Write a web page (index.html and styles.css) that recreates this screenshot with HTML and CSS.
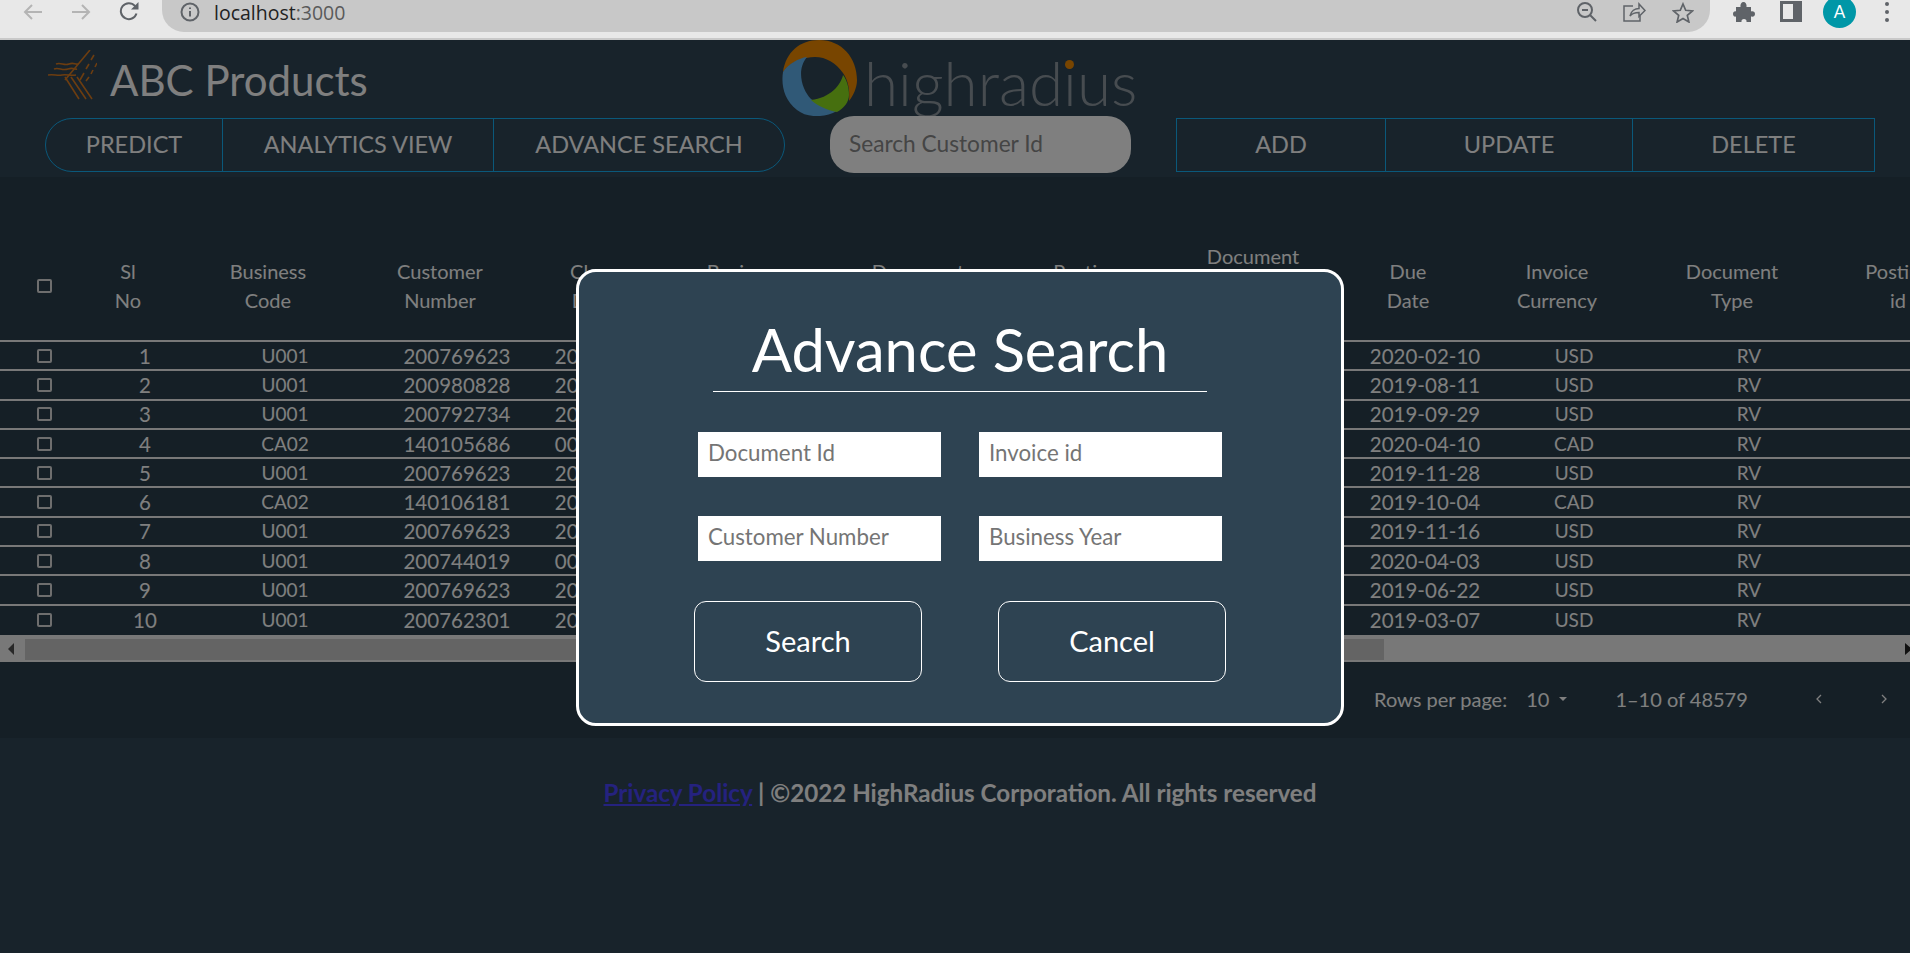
FILE: index.html

```html
<!DOCTYPE html>
<html lang="en">
<head>
    <meta charset="UTF-8">
    <meta name="viewport" content="width=device-width, initial-scale=1.0">
    <title>ABC Products</title>
    <link rel="stylesheet" href="styles.css">
</head>
<body>
    <!-- browser toolbar -->
    <div class="toolbar">
        <svg class="tb-icon tb-back" viewBox="0 0 20 18"><path d="M19 9H2M9 2 2 9l7 7"/></svg>
        <svg class="tb-icon tb-forward" viewBox="0 0 20 18"><path d="M1 9h17M11 2l7 7-7 7"/></svg>
        <svg class="tb-icon tb-reload" viewBox="0 0 21 20"><path d="M17.5 12.5a8 8 0 1 1-1.6-7.6L18 7"/><path class="solid" d="M19.500 1v7.500H12z"/></svg>
        <div class="url-pill">
            <svg class="tb-icon tb-info" viewBox="0 0 20 20"><circle cx="10" cy="10" r="8.500"/><path d="M10 9v5.500M10 5.500v1.500"/></svg>
            <span class="url"><b>localhost</b>:3000</span>
            <div class="pill-icons">
                <svg class="tb-icon tb-zoom" viewBox="0 0 20 20"><circle cx="8" cy="8" r="7"/><path d="M5 8h6M13 13l6 6"/></svg>
                <svg class="tb-icon tb-share" viewBox="0 0 23 20"><path d="M10 4H1v15h16v-5"/><path d="M7 14c1-5 5-7.500 9-7.500V2l6 6.500-6 6V10.500c-4 0-7 1-9 3.500z"/></svg>
                <svg class="tb-icon tb-star" viewBox="0 0 22 21"><path d="m11 2 2.700 6.300 6.800.6-5.200 4.500 1.600 6.600L11 16.500 5.100 20l1.600-6.600L1.500 8.900l6.800-.6z"/></svg>
            </div>
        </div>
        <svg class="tb-puzzle" viewBox="0 0 22 20"><path d="M3 5h4.500C7 2 8.500 0 10.500 0s3.500 2 3 5H18v4.500c2.500-.5 4 .5 4 2.500s-1.500 3-4 2.500V20h-4.500c.5-2-1-3-2.500-3s-3 1-2.500 3H3v-5.500C1.500 15 0 14 0 12s1.500-3 3-2.500z"/></svg>
        <div class="tb-panel"></div>
        <div class="avatar">A</div>
        <div class="tb-dots"><i></i><i></i><i></i></div>
    </div>

    <div class="app">
        <header class="brand-row">
            <svg class="abc-logo" viewBox="0 0 49 50">
                <path d="M8 14c5-2 8 2 13 0s6 1 9 0M6 19c5-2 8 2 14 0s6 1 9 0M0 25c6-1 9 1 14 0s8 1 14 0"/>
                <path d="M42 0 17 30M46 5l-3 5m-2 4-3 5m-2 4-4 7M49 13l-2 4m-2 3-2 4m-2 3-3 4"/>
                <path d="m17 27 14 22M23 27l15 22M29 27l15 22"/>
            </svg>
            <span class="abc-title">ABC Products</span>
            <div class="hr-logo">
                <svg class="hr-ring" viewBox="0 0 75 76">
                    <path class="ring-orange" d="M1 32C4 12 18 0 37 0c23 0 38 18 38 40 0 8-4 16-8 21 1-11-1-21-6-28-7-10-17-16-28-16C22 17 8 22 1 32z"/>
                    <path class="ring-blue" d="M25 17C17 18 6 24 1 32c-2 13 1 28 14 38 10 8 27 8 40 1-11-3-19-7-26-12C20 50 14 30 25 17z"/>
                    <path class="ring-green" d="M61 35c-2 10-13 23-32 25 7 6 16 10 26 12 7-4 12-10 12-17 0-7-2-15-6-20z"/>
                </svg>
                <span class="hr-name">highrad<span class="hr-i">i</span>us</span>
            </div>
        </header>

        <div class="nav-row">
            <div class="btn-group btn-group-left">
                <button class="nav-btn btn-predict">PREDICT</button>
                <button class="nav-btn btn-analytics">ANALYTICS VIEW</button>
                <button class="nav-btn btn-advance">ADVANCE SEARCH</button>
            </div>
            <input class="search-box" type="text" placeholder="Search Customer Id">
            <div class="btn-group btn-group-right">
                <button class="nav-btn btn-add">ADD</button>
                <button class="nav-btn btn-update">UPDATE</button>
                <button class="nav-btn btn-delete">DELETE</button>
            </div>
        </div>

        <section class="grid-panel">
            <div class="table-wrap">
                <table class="data-table">
                    <colgroup>
                        <col class="c-check"><col class="c-sl"><col class="c-code"><col class="c-cust">
                        <col class="c-clear"><col class="c-year"><col class="c-docid"><col class="c-post">
                        <col class="c-create"><col class="c-due"><col class="c-curr"><col class="c-type"><col class="c-pid">
                    </colgroup>
                    <thead>
                        <tr>
                            <th class="th-check"><input class="check" type="checkbox"></th>
                            <th>Sl<br>No</th>
                            <th>Business<br>Code</th>
                            <th>Customer<br>Number</th>
                            <th>Clear<br>Date</th>
                            <th>Business<br>Year</th>
                            <th>Document<br>Id</th>
                            <th>Posting<br>Date</th>
                            <th>Document<br>Create<br>Date</th>
                            <th>Due<br>Date</th>
                            <th>Invoice<br>Currency</th>
                            <th>Document<br>Type</th>
                            <th>Posting<br>id</th>
                        </tr>
                    </thead>
                    <tbody>
                        <tr><td><input class="check" type="checkbox"></td><td>1</td><td>U001</td><td>200769623</td><td>2020-02-11</td><td>2020</td><td>1930438491</td><td>2020-01-26</td><td>2020-01-25</td><td>2020-02-10</td><td>USD</td><td>RV</td><td></td></tr>
                        <tr><td><input class="check" type="checkbox"></td><td>2</td><td>U001</td><td>200980828</td><td>2019-08-08</td><td>2019</td><td>1929646410</td><td>2019-07-22</td><td>2019-07-22</td><td>2019-08-11</td><td>USD</td><td>RV</td><td></td></tr>
                        <tr><td><input class="check" type="checkbox"></td><td>3</td><td>U001</td><td>200792734</td><td>2019-12-30</td><td>2019</td><td>1929873765</td><td>2019-09-14</td><td>2019-09-14</td><td>2019-09-29</td><td>USD</td><td>RV</td><td></td></tr>
                        <tr><td><input class="check" type="checkbox"></td><td>4</td><td>CA02</td><td>140105686</td><td>0000-00-00</td><td>2020</td><td>2960623488</td><td>2020-03-30</td><td>2020-03-30</td><td>2020-04-10</td><td>CAD</td><td>RV</td><td></td></tr>
                        <tr><td><input class="check" type="checkbox"></td><td>5</td><td>U001</td><td>200769623</td><td>2019-11-25</td><td>2019</td><td>1930147974</td><td>2019-11-13</td><td>2019-11-13</td><td>2019-11-28</td><td>USD</td><td>RV</td><td></td></tr>
                        <tr><td><input class="check" type="checkbox"></td><td>6</td><td>CA02</td><td>140106181</td><td>2019-09-20</td><td>2019</td><td>2960581231</td><td>2019-09-20</td><td>2019-09-20</td><td>2019-10-04</td><td>CAD</td><td>RV</td><td></td></tr>
                        <tr><td><input class="check" type="checkbox"></td><td>7</td><td>U001</td><td>200769623</td><td>2019-11-12</td><td>2019</td><td>1930083275</td><td>2019-11-01</td><td>2019-11-01</td><td>2019-11-16</td><td>USD</td><td>RV</td><td></td></tr>
                        <tr><td><input class="check" type="checkbox"></td><td>8</td><td>U001</td><td>200744019</td><td>0000-00-00</td><td>2020</td><td>1930659387</td><td>2020-03-19</td><td>2020-03-19</td><td>2020-04-03</td><td>USD</td><td>RV</td><td></td></tr>
                        <tr><td><input class="check" type="checkbox"></td><td>9</td><td>U001</td><td>200769623</td><td>2019-06-11</td><td>2019</td><td>1929439637</td><td>2019-06-07</td><td>2019-06-07</td><td>2019-06-22</td><td>USD</td><td>RV</td><td></td></tr>
                        <tr><td><input class="check" type="checkbox"></td><td>10</td><td>U001</td><td>200762301</td><td>2019-03-11</td><td>2019</td><td>1928893455</td><td>2019-02-20</td><td>2019-02-20</td><td>2019-03-07</td><td>USD</td><td>RV</td><td></td></tr>
                    </tbody>
                </table>
            </div>

            <div class="scrollbar">
                <span class="scroll-arrow arrow-left"></span>
                <div class="scroll-thumb"></div>
                <span class="scroll-arrow arrow-right"></span>
            </div>

            <div class="pagination">
                <span class="rows-label">Rows per page:</span>
                <span class="rows-value">10</span>
                <span class="rows-caret"></span>
                <span class="rows-count">1–10 of 48579</span>
                <svg class="page-arrow arrow-prev" viewBox="0 0 8 12"><path d="M6 2 2 6l4 4"/></svg>
                <svg class="page-arrow arrow-next" viewBox="0 0 8 12"><path d="m2 2 4 4-4 4"/></svg>
            </div>
        </section>

        <footer class="page-footer">
            <a href="#">Privacy Policy</a> | ©2022 HighRadius Corporation. All rights reserved
        </footer>

        <div class="backdrop"></div>

        <!-- Advance search dialog -->
        <div class="modal">
            <h2 class="modal-title">Advance Search</h2>
            <div class="modal-fields">
                <input type="text" placeholder="Document Id">
                <input type="text" placeholder="Invoice id">
                <input type="text" placeholder="Customer Number">
                <input type="text" placeholder="Business Year">
            </div>
            <div class="modal-actions">
                <button>Search</button>
                <button>Cancel</button>
            </div>
        </div>
    </div>
</body>
</html>
```

FILE: styles.css

```css
html, body {
    margin: 0;
    height: 953px;
    overflow: hidden;
}

body {
    font-family: Lato, "Open Sans", sans-serif;
    background-color: #e8e8e8;
}

/* browser toolbar */
.toolbar {
    display: flex;
    align-items: flex-start;
    height: 38px;
    border-bottom: 2px solid #c9c9c9;
    overflow: hidden;
}

.tb-icon {
    fill: none;
    stroke: #5f6368;
    stroke-width: 2;
    flex: none;
}

.tb-icon .solid {
    fill: #5f6368;
    stroke: none;
}

.tb-back, .tb-forward {
    width: 20px;
    height: 18px;
    margin-top: 3px;
    stroke: #b4b4b4;
}

.tb-back { margin-left: 23px; }
.tb-forward { margin-left: 28px; }

.tb-reload {
    width: 21px;
    height: 20px;
    margin: 1px 0 0 28px;
}

.url-pill {
    display: flex;
    align-items: center;
    width: 1548px;
    height: 32px;
    margin-left: 22px;
    padding: 0 16px 8px 18px;
    box-sizing: border-box;
    background-color: #c8c8c8;
    border-radius: 0 0 22px 22px;
}

.tb-info {
    width: 20px;
    height: 20px;
}

.url {
    margin-left: 14px;
    font-family: "Open Sans", sans-serif;
    font-size: 19.500px;
    color: #5a5a5a;
}

.url b {
    font-weight: 400;
    color: #222;
}

.pill-icons {
    display: flex;
    align-items: center;
    gap: 26px;
    margin-left: auto;
}

.tb-zoom { width: 20px; height: 20px; }
.tb-share { width: 23px; height: 20px; stroke-width: 1.500; }
.tb-star { width: 22px; height: 21px; stroke-width: 1.700; }

.tb-puzzle {
    width: 22px;
    height: 20px;
    margin: 2px 0 0 23px;
    fill: #5f6368;
    flex: none;
}

.tb-panel {
    width: 22px;
    height: 21px;
    margin: 1px 0 0 25px;
    box-sizing: border-box;
    border: 3px solid #5f6368;
    border-right-width: 9px;
    flex: none;
}

.avatar {
    width: 33px;
    height: 32px;
    margin: -4px 0 0 21px;
    padding-top: 5px;
    box-sizing: border-box;
    background-color: #0097a7;
    border-radius: 50%;
    color: #fff;
    font-size: 17px;
    text-align: center;
    flex: none;
}

.tb-dots {
    display: flex;
    flex-direction: column;
    gap: 4px;
    margin: 2px 0 0 29px;
}

.tb-dots i {
    width: 4px;
    height: 4px;
    background-color: #5f6368;
    border-radius: 50%;
}

/* app */
.app {
    position: relative;
    height: 913px;
    background-color: #304656;
    color: #fff;
    overflow: hidden;
}

.brand-row {
    display: flex;
    align-items: center;
    height: 76px;
}

.abc-logo {
    width: 49px;
    height: 50px;
    margin: 0 0 6px 48px;
    fill: none;
    stroke: #d97a20;
    stroke-width: 1.600;
    flex: none;
}

.abc-title {
    width: 672px;
    margin: 4px 0 0 13px;
    font-size: 42px;
    flex: none;
}

.hr-logo {
    display: flex;
    align-items: flex-start;
    height: 76px;
}

.hr-ring {
    width: 75px;
    height: 76px;
    flex: none;
}

.ring-orange { fill: #f08a00; }
.ring-blue { fill: #60b2ef; }
.ring-green { fill: #8cde1e; }

.hr-name {
    margin: 4px 0 0 7px;
    font-size: 62px;
    font-weight: 300;
    line-height: 76px;
    color: #8e98a0;
}

.hr-i {
    position: relative;
}

/* orange dot sits over the tittle of the i */
.hr-i::before {
    content: "";
    position: absolute;
    left: 50%;
    top: 15px;
    width: 9px;
    height: 9px;
    margin-left: -4.500px;
    background-color: #f08a00;
    border-radius: 50%;
}

.nav-row {
    display: flex;
    align-items: center;
    height: 57px;
    padding-left: 45px;
    position: relative;
}

.btn-group {
    display: flex;
    height: 54px;
    box-sizing: border-box;
    border: 1px solid #14b0f5;
    flex: none;
}

.btn-group-left {
    width: 740px;
    border-radius: 27px;
}

.btn-group-right {
    width: 699px;
    margin-left: 45px;
}

.nav-btn {
    height: 100%;
    padding: 0 0 2px;
    background: none;
    border: none;
    border-left: 1px solid #14b0f5;
    color: #fff;
    font-family: inherit;
    font-size: 23.500px;
}

.nav-btn:first-child { border-left: none; }

.btn-predict { width: 176px; }
.btn-analytics { width: 271px; }
.btn-advance { width: 291px; }
.btn-add { width: 208px; }
.btn-update { width: 247px; }
.btn-delete { width: 242px; }

.search-box {
    width: 301px;
    height: 57px;
    margin-left: 45px;
    padding: 0 19px 2px;
    box-sizing: border-box;
    background-color: #fff;
    border: none;
    border-radius: 24px;
    font-family: inherit;
    font-size: 22.700px;
    flex: none;
}

.search-box::placeholder { color: #8a8a8a; }

/* table */
.grid-panel {
    margin-top: 4px;
    background-color: #2a3e4c;
}

.table-wrap {
    padding-top: 56px;
    overflow: hidden;
}

.data-table {
    width: 1984px;
    table-layout: fixed;
    border-collapse: separate;
    border-spacing: 0;
    font-size: 19px;
    text-align: center;
}

.c-check { width: 88px; }
.c-sl { width: 114px; }
.c-code { width: 166px; }
.c-cust { width: 178px; }
.c-clear { width: 128px; }
.c-year { width: 176px; }
.c-docid { width: 170px; }
.c-post { width: 166px; }
.c-create { width: 168px; }
.c-due { width: 142px; }
.c-curr { width: 156px; }
.c-type { width: 194px; }
.c-pid { width: 138px; }

.data-table th {
    height: 109px;
    padding: 0 34px 2px 0;
    box-sizing: border-box;
    border-bottom: 2px solid #f0f0f0;
    font-size: 20px;
    font-weight: 400;
    line-height: 29px;
}

.data-table th.th-check { padding-right: 0; }

.data-table td {
    height: 29.300px;
    padding: 0;
    box-sizing: border-box;
    border-bottom: 2px solid #f0f0f0;
    line-height: 22px;
}

/* digits run wider than letters in the original face */
.data-table td:nth-child(2),
.data-table td:nth-child(4),
.data-table td:nth-child(5),
.data-table td:nth-child(6),
.data-table td:nth-child(7),
.data-table td:nth-child(8),
.data-table td:nth-child(9),
.data-table td:nth-child(10) {
    font-size: 20.500px;
}

.data-table tbody tr:last-child td { border-bottom: none; }

.check {
    appearance: none;
    display: block;
    width: 15px;
    height: 14px;
    margin: 0 auto;
    box-sizing: border-box;
    border: 2px solid #ddd;
    border-radius: 2px;
}

.scrollbar {
    display: flex;
    align-items: center;
    height: 27px;
    padding-top: 2px;
    box-sizing: border-box;
    background-color: #f1f1f1;
    position: relative;
}

.scroll-thumb {
    width: 1359px;
    height: 21px;
    margin-left: 25px;
    background-color: #c8c8c8;
}

.scroll-arrow {
    position: absolute;
    top: 8px;
    border: 6px solid transparent;
}

.arrow-left {
    left: 8px;
    border-right: 6px solid #505050;
    border-left: none;
}

.arrow-right {
    right: -2px;
    border-left: 7px solid #222;
    border-right: none;
}

.pagination {
    display: flex;
    align-items: center;
    height: 76px;
    padding-bottom: 2px;
    box-sizing: border-box;
    font-size: 20px;
}

.rows-label { margin-left: 1374px; }
.rows-value { margin-left: 19px; }

.rows-caret {
    margin-left: 10px;
    border: 4px solid transparent;
    border-top: 4px solid #fff;
    border-bottom: none;
}

.rows-count { margin-left: 48px; }

.page-arrow {
    width: 8px;
    height: 12px;
    fill: none;
    stroke: #fff;
    stroke-width: 1.300;
    flex: none;
}

.arrow-prev { margin-left: 67px; }
.arrow-next { margin-left: 57px; }

.page-footer {
    margin-top: 40px;
    padding-left: 10px;
    font-size: 24.200px;
    font-weight: 700;
    line-height: 30px;
    text-align: center;
}

.page-footer a { color: #4a44ff; }

/* dialog */
.backdrop {
    position: absolute;
    inset: 0;
    background-color: rgba(0, 0, 0, 0.5);
}

.modal {
    position: absolute;
    left: 576px;
    top: 229px;
    width: 768px;
    height: 457px;
    padding-top: 34px;
    box-sizing: border-box;
    background-color: #2e4352;
    border: 3px solid #fff;
    border-radius: 20px;
}

.modal-title {
    display: flex;
    align-items: center;
    justify-content: center;
    width: 494px;
    height: 86px;
    margin: 0 auto;
    box-sizing: border-box;
    border-bottom: 1px solid #fff;
    font-size: 59.700px;
    font-weight: 400;
}

.modal-fields {
    display: grid;
    grid-template-columns: 243px 243px;
    justify-content: center;
    gap: 39px 38px;
    margin-top: 40px;
}

.modal-fields input {
    height: 45px;
    padding: 0 10px 4px;
    box-sizing: border-box;
    border: none;
    font-family: inherit;
    font-size: 22.300px;
}

.modal-fields input::placeholder { color: #757575; }

.modal-actions {
    display: flex;
    justify-content: center;
    gap: 76px;
    margin-top: 40px;
}

.modal-actions button {
    width: 228px;
    height: 81px;
    padding: 0 0 3px;
    background: none;
    border: 1px solid #fff;
    border-radius: 12px;
    color: #fff;
    font-family: inherit;
    font-size: 29px;
}
```
